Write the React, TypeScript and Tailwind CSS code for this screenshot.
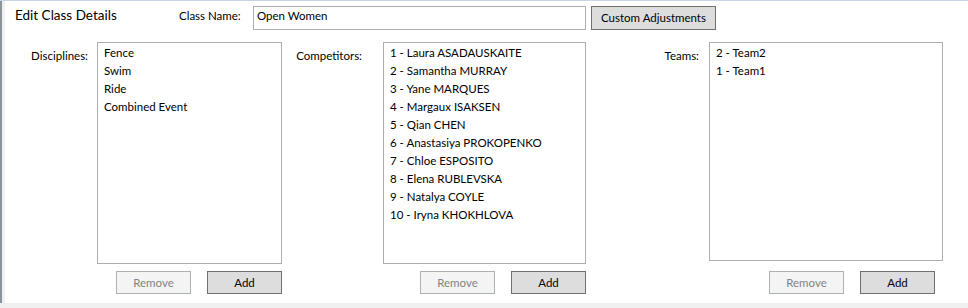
const disciplines = ["Fence", "Swim", "Ride", "Combined Event"];

const competitors = [
  "1 - Laura ASADAUSKAITE",
  "2 - Samantha MURRAY",
  "3 - Yane MARQUES",
  "4 - Margaux ISAKSEN",
  "5 - Qian CHEN",
  "6 - Anastasiya PROKOPENKO",
  "7 - Chloe ESPOSITO",
  "8 - Elena RUBLEVSKA",
  "9 - Natalya COYLE",
  "10 - Iryna KHOKHLOVA",
];

const teams = ["2 - Team2", "1 - Team1"];

function ListBox({
  items,
  className,
}: {
  items: string[];
  className: string;
}) {
  return (
    <div
      className={`border border-[#abadb3] bg-white pt-[1px] px-[6px] ${className}`}
    >
      {items.map((item) => (
        <div key={item} className="leading-[18px] whitespace-nowrap">
          {item}
        </div>
      ))}
    </div>
  );
}

function ButtonRow({ className }: { className: string }) {
  return (
    <div className={`flex justify-end gap-[16px] ${className}`}>
      <button
        disabled
        className="w-[75px] h-[23px] border border-[#adb2b5] bg-[#f4f4f4] text-[#838383] leading-none"
      >
        Remove
      </button>
      <button className="w-[75px] h-[23px] border border-[#707070] bg-[#dddddd] text-black leading-none">
        Add
      </button>
    </div>
  );
}

export default function App() {
  return (
    <div className="w-[968px] h-[308px] flex flex-col bg-white border-t border-t-[#c8d5e6] font-[Lato,sans-serif] text-[11.5px] text-black overflow-hidden">
      <div className="flex flex-1 border-l-2 border-l-[#8d939b]">
        <div className="flex flex-col flex-1 border-l-[3px] border-l-[#f0f0f0]">
          {/* header row */}
          <div className="flex items-start pt-[5px] pl-[10px]">
            <div className="w-[164px] text-[13.5px] leading-[17px] pt-[1px]">
              Edit Class Details
            </div>
            <div className="w-[74px] leading-[15px] mt-[2px] whitespace-nowrap">
              Class Name:
            </div>
            <div className="w-[333px] h-[24px] border border-[#abadb3] px-[3px] leading-[15px] pt-[1px]">
              Open Women
            </div>
            <button className="ml-[5px] w-[125px] h-[24px] border border-[#707070] bg-[#dddddd] leading-none">
              Custom Adjustments
            </button>
          </div>

          {/* lists */}
          <div className="flex items-start mt-[12px]">
            <div className="w-[83px] text-right leading-[15px] mt-[6px]">
              Disciplines:
            </div>
            <div className="ml-[9px] w-[185px] flex flex-col">
              <ListBox items={disciplines} className="h-[222px]" />
              <ButtonRow className="mt-[7px]" />
            </div>

            <div className="w-[80px] text-right leading-[15px] mt-[6px]">
              Competitors:
            </div>
            <div className="ml-[21px] w-[203px] flex flex-col">
              <ListBox items={competitors} className="h-[222px]" />
              <ButtonRow className="mt-[7px]" />
            </div>

            <div className="w-[113px] text-right leading-[15px] mt-[6px]">
              Teams:
            </div>
            <div className="ml-[10px] w-[234px] flex flex-col">
              <ListBox items={teams} className="h-[219px]" />
              <ButtonRow className="mt-[10px] pr-[8px]" />
            </div>
          </div>
        </div>
      </div>
      <div className="h-[5px] bg-[#f0f0f0]" />
    </div>
  );
}
